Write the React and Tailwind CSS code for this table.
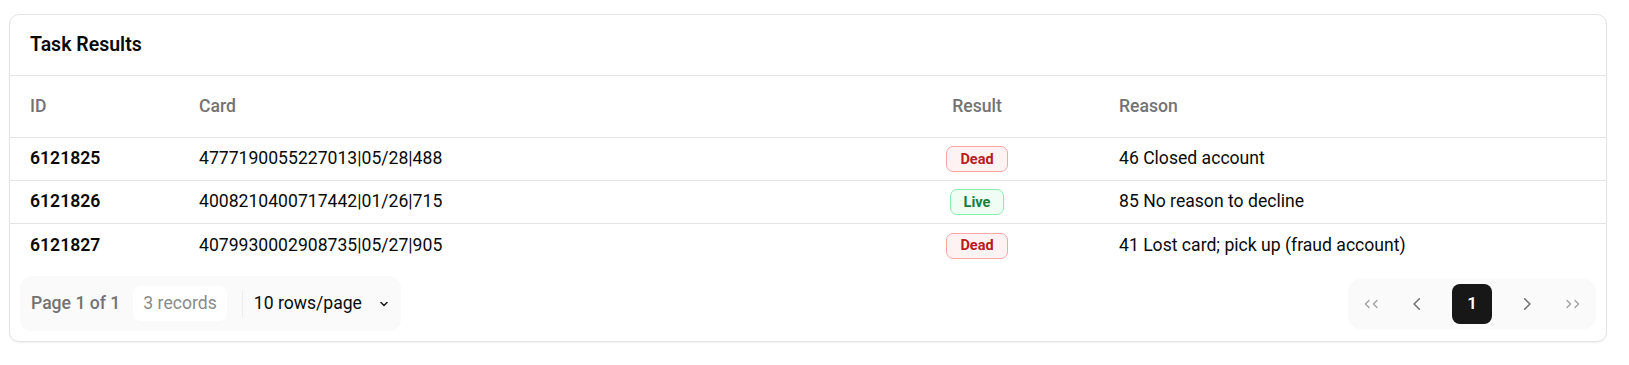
import React from 'react';

const rows = [
  { id: '6121825', card: '4777190055227013|05/28|488', result: 'Dead', reason: '46 Closed account' },
  { id: '6121826', card: '4008210400717442|01/26|715', result: 'Live', reason: '85 No reason to decline' },
  { id: '6121827', card: '4079930002908735|05/27|905', result: 'Dead', reason: '41 Lost card; pick up (fraud account)' },
];

const Badge = ({ value }) =>
  value === 'Live' ? (
    <span className="inline-flex items-center justify-center h-[26px] px-[13px] rounded-[7px] border border-[#86efac] bg-[#f0fdf4] text-[#15803d] text-[14.5px] font-bold">
      Live
    </span>
  ) : (
    <span className="inline-flex items-center justify-center h-[26px] px-[13px] rounded-[7px] border border-[#fca5a5] bg-[#fef2f2] text-[#b91c1c] text-[14.5px] font-bold">
      Dead
    </span>
  );

const Chev = ({ dir = 'left', double = false }) => (
  <svg width={double ? 18 : 14} height="14" viewBox={double ? '0 0 18 12' : '0 0 12 12'} fill="none" stroke="currentColor" strokeWidth="1.4" strokeLinecap="round" strokeLinejoin="round">
    {dir === 'left' ? (
      double ? (
        <>
          <path d="M6 2.5 2.5 6 6 9.5" />
          <path d="M14 2.5 10.5 6 14 9.5" />
        </>
      ) : (
        <path d="M8 1.5 3.5 6 8 10.5" />
      )
    ) : double ? (
      <>
        <path d="M4 2.5 7.5 6 4 9.5" />
        <path d="M12 2.5 15.5 6 12 9.5" />
      </>
    ) : (
      <path d="M4 1.5 8.5 6 4 10.5" />
    )}
  </svg>
);

export default function App() {
  return (
    <div className="w-full min-h-screen bg-white pl-[9px] pr-[22px] pt-[14px] text-[#111] font-['Roboto',sans-serif]">
      <div className="border border-[#e5e5e5] rounded-[10px] bg-white shadow-[0_1px_2px_rgba(0,0,0,0.06)]">
        {/* Header */}
        <div className="h-[61px] px-[20px] flex items-center border-b border-[#e5e5e5]">
          <h2 className="text-[19.5px] font-semibold text-[#0a0a0a]">Task Results</h2>
        </div>

        {/* Table */}
        <table className="w-full text-[17.6px] border-collapse">
          <thead>
            <tr className="h-[61px] border-b border-[#e5e5e5] text-[#737373]">
              <th className="w-[189px] pl-[20px] text-left font-medium">ID</th>
              <th className="text-left font-medium">Card</th>
              <th className="w-[160px] text-center font-medium">Result</th>
              <th className="w-[549px] pl-[62px] text-left font-medium">Reason</th>
            </tr>
          </thead>
          <tbody>
            {rows.map((r, i) => (
              <tr key={r.id} className={`h-[43px] ${i < rows.length - 1 ? 'border-b border-[#e5e5e5]' : ''}`}>
                <td className="pl-[20px] font-semibold text-[#0a0a0a]">{r.id}</td>
                <td className="text-[#0a0a0a]">{r.card}</td>
                <td className="text-center">
                  <Badge value={r.result} />
                </td>
                <td className="pl-[62px] text-[#0a0a0a]">{r.reason}</td>
              </tr>
            ))}
          </tbody>
        </table>

        {/* Footer */}
        <div className="flex items-center justify-between px-[10px] pt-[10px] pb-[10px] text-[17.6px]">
          <div className="h-[55px] flex items-center rounded-[12px] bg-[#fafafa] pl-[11px] pr-[12px]">
            <span className="text-[#737373] font-medium">Page 1 of 1</span>
            <span className="ml-[13px] h-[35px] px-[10px] flex items-center rounded-[8px] bg-white text-[#8a8a8a]">3 records</span>
            <span className="ml-[15px] w-px h-[26px] bg-[#ececec]" />
            <span className="ml-[11px] text-[#0a0a0a]">10 rows/page</span>
            <svg className="ml-[17px] text-[#222]" width="10" height="10" viewBox="0 0 10 10" fill="none" stroke="currentColor" strokeWidth="1.6" strokeLinecap="round" strokeLinejoin="round">
              <path d="M2 3.5 5 6.5 8 3.5" />
            </svg>
          </div>

          <div className="h-[50px] flex items-center rounded-[12px] bg-[#fafafa] px-[4px]">
            <button className="w-10 h-10 flex items-center justify-center text-[#a3a3a3]">
              <Chev dir="left" double />
            </button>
            <button className="ml-[5px] w-10 h-10 flex items-center justify-center text-[#737373]">
              <Chev dir="left" />
            </button>
            <button className="ml-[15px] w-10 h-10 flex items-center justify-center rounded-[8px] bg-[#171717] text-white font-semibold text-[17px]">
              1
            </button>
            <button className="ml-[15px] w-10 h-10 flex items-center justify-center text-[#737373]">
              <Chev dir="right" />
            </button>
            <button className="ml-[5px] w-10 h-10 flex items-center justify-center text-[#a3a3a3]">
              <Chev dir="right" double />
            </button>
          </div>
        </div>
      </div>
    </div>
  );
}
